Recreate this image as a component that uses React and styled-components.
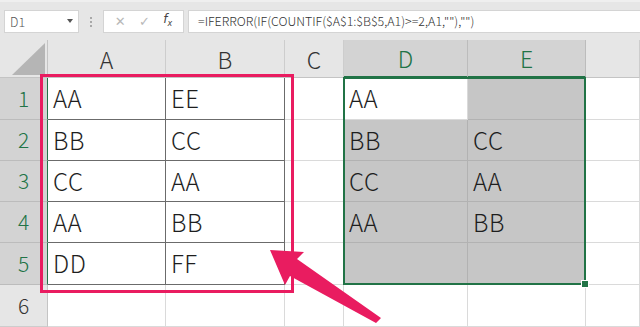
import React from "react";
import styled, { createGlobalStyle } from "styled-components";

const GREEN = "#217346";
const MARK = "#e91c60";

const Global = createGlobalStyle`
  html, body { margin: 0; padding: 0; background: #fff; }
  body { width: 640px; height: 327px; overflow: hidden; }
  * { box-sizing: border-box; }
`;

const Page = styled.div`
  position: relative;
  width: 640px;
  height: 327px;
  overflow: hidden;
  font-family: "Noto Sans CJK JP", "Noto Sans", sans-serif;
  background: #fff;
`;

/* ---------- formula toolbar ---------- */
const Toolbar = styled.div`
  height: 40px;
  display: flex;
  align-items: center;
  padding: 0 0 0 4px;
  background: #e6e6e6;
  border-top: 2px solid #efefef;
`;

const NameBox = styled.div`
  width: 75px;
  height: 23px;
  background: #fff;
  border: 1px solid #d4d4d4;
  display: flex;
  align-items: center;
  justify-content: space-between;
  padding: 0 5px 0 5px;
  font-size: 12.5px;
  font-weight: 300;
  color: #555;
`;

const Caret = styled.span`
  width: 0;
  height: 0;
  border-left: 3px solid transparent;
  border-right: 3px solid transparent;
  border-top: 4px solid #555;
`;

const Grip = styled.div`
  width: 24px;
  display: flex;
  justify-content: center;
  align-items: center;
  height: 23px;
`;

const GripDots = styled.span`
  width: 2px;
  height: 11px;
  background: radial-gradient(circle, #a8a8a8 0.8px, transparent 1px) 0 0 / 2px 4px repeat-y;
`;

const FxBox = styled.div`
  width: 81px;
  height: 23px;
  background: #fff;
  border: 1px solid #d4d4d4;
  display: flex;
  align-items: center;
  justify-content: space-around;
  padding: 0 4px;
  margin-right: 4px;
`;

const ToolIcon = styled.span`
  font-family: "DejaVu Sans", sans-serif;
  font-size: ${(p) => p.$size || 12}px;
  color: ${(p) => p.$color || "#b8b8b8"};
  font-style: ${(p) => (p.$italic ? "italic" : "normal")};
  line-height: 1;
`;

const FormulaBar = styled.div`
  flex: 1;
  height: 23px;
  background: #fff;
  border: 1px solid #d4d4d4;
  border-right: none;
  display: flex;
  align-items: center;
  padding-left: 9px;
  font-size: 12.4px;
  font-weight: 300;
  color: #333;
  white-space: nowrap;
`;

/* ---------- sheet grid ---------- */
const Sheet = styled.div`
  display: grid;
  grid-template-columns: 48px 118px 119px 59px 124px 118px 1fr;
  grid-template-rows: 38px 42px 41px 41px 41px 42px 42px;
  font-weight: 300;
`;

const Cell = styled.div`
  grid-row: ${(p) => p.$r + 1};
  grid-column: ${(p) => p.$c + 1};
  display: flex;
  align-items: center;
  padding: 0 0 2px 5px;
  font-size: 24px;
  letter-spacing: 0.6px;
  color: #1e1e1e;
  background: ${(p) => (p.$sel ? "#c6c6c6" : "#fff")};
  border-right: 1px solid ${(p) => (p.$boxed ? "#6b6b6b" : p.$sel ? "#b2b2b2" : "#dadada")};
  border-bottom: 1px solid ${(p) => (p.$boxed ? "#6b6b6b" : p.$sel ? "#b2b2b2" : "#dadada")};
`;

const ColHead = styled.div`
  grid-row: 1;
  grid-column: ${(p) => p.$c + 1};
  display: flex;
  align-items: center;
  justify-content: center;
  font-size: 23px;
  color: ${(p) => (p.$on ? GREEN : "#333")};
  background: ${(p) => (p.$on ? "#d3d3d3" : "#e6e6e6")};
  border-right: 1px solid ${(p) => (p.$on ? "#bcbcbc" : "#cdcdcd")};
  border-bottom: ${(p) => (p.$on ? `2px solid ${GREEN}` : "1px solid #c4c4c4")};
`;

const RowHead = styled.div`
  grid-row: ${(p) => p.$r + 1};
  grid-column: 1;
  display: flex;
  align-items: center;
  justify-content: center;
  padding-bottom: 2px;
  font-size: 21px;
  color: ${(p) => (p.$on ? GREEN : "#333")};
  background: ${(p) => (p.$on ? "#d3d3d3" : "#e6e6e6")};
  border-bottom: 1px solid ${(p) => (p.$on ? "#bcbcbc" : "#cdcdcd")};
  border-right: 1px solid ${(p) => (p.$on ? GREEN : "#c4c4c4")};
`;

const Corner = styled.div`
  grid-row: 1;
  grid-column: 1;
  background: #e6e6e6;
  border-right: 1px solid #c4c4c4;
  border-bottom: 1px solid #c4c4c4;
  position: relative;
  &::after {
    content: "";
    position: absolute;
    right: 2px;
    bottom: 2px;
    width: 33px;
    height: 32px;
    background: #b5b5b5;
    clip-path: polygon(100% 0, 100% 100%, 0 100%);
  }
`;

/* selection outline around D1:E5 */
const Selection = styled.div`
  grid-row: 2 / 7;
  grid-column: 5 / 7;
  position: relative;
  z-index: 2;
  margin: -1px 0 0 -1px;
  border: 2px solid ${GREEN};
  pointer-events: none;
  &::after {
    content: "";
    position: absolute;
    right: -5px;
    bottom: -5px;
    width: 6px;
    height: 6px;
    background: ${GREEN};
    border: 1px solid #fff;
  }
`;

/* marker frame around A1:B5 */
const MarkFrame = styled.div`
  grid-row: 2 / 7;
  grid-column: 2 / 4;
  position: relative;
  z-index: 3;
  margin: -4px -9px -8px -8px;
  border: 3px solid ${MARK};
  pointer-events: none;
`;

const ArrowLayer = styled.svg`
  position: absolute;
  left: 0;
  top: 0;
  width: 640px;
  height: 327px;
  z-index: 4;
  pointer-events: none;
`;

const source = [
  ["AA", "EE"],
  ["BB", "CC"],
  ["CC", "AA"],
  ["AA", "BB"],
  ["DD", "FF"],
];
const result = [
  ["AA", ""],
  ["BB", "CC"],
  ["CC", "AA"],
  ["AA", "BB"],
  ["", ""],
];
const cols = ["A", "B", "C", "D", "E", ""];

export default function App() {
  const cells = [];
  for (let r = 1; r <= 6; r++) {
    for (let c = 1; c <= 6; c++) {
      const inSrc = r <= 5 && c <= 2;
      const inRes = r <= 5 && (c === 4 || c === 5);
      let text = "";
      if (inSrc) text = source[r - 1][c - 1];
      if (inRes) text = result[r - 1][c - 4];
      cells.push(
        <Cell
          key={`${r}-${c}`}
          $r={r}
          $c={c}
          $boxed={inSrc}
          $sel={inRes && !(r === 1 && c === 4)}
        >
          {text}
        </Cell>
      );
    }
  }

  return (
    <Page>
      <Global />
      <Toolbar>
        <NameBox>
          D1
          <Caret />
        </NameBox>
        <Grip>
          <GripDots />
        </Grip>
        <FxBox>
          <ToolIcon $size={13}>✕</ToolIcon>
          <ToolIcon $size={13}>✓</ToolIcon>
          <ToolIcon $size={12} $color="#444" $italic>
            f<sub style={{ fontSize: 8 }}>x</sub>
          </ToolIcon>
        </FxBox>
        <FormulaBar>=IFERROR(IF(COUNTIF($A$1:$B$5,A1)&gt;=2,A1,""),"")</FormulaBar>
      </Toolbar>

      <Sheet>
        <Corner />
        {cols.map((name, i) => (
          <ColHead key={i} $c={i + 1} $on={i === 3 || i === 4}>
            {name}
          </ColHead>
        ))}
        {[1, 2, 3, 4, 5, 6].map((r) => (
          <RowHead key={r} $r={r} $on={r <= 5}>
            {r}
          </RowHead>
        ))}
        {cells}
        <Selection />
        <MarkFrame />
      </Sheet>

      <ArrowLayer viewBox="0 0 640 327">
        <polygon
          points="270,250 304,252 297,259 381,318 376,323 290,276 285,285"
          fill={MARK}
        />
      </ArrowLayer>
    </Page>
  );
}
